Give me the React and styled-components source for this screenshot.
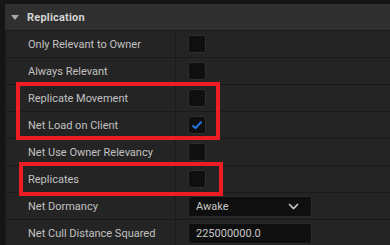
import React from 'react'
import styled, { createGlobalStyle } from 'styled-components'

const GlobalStyle = createGlobalStyle`
  html, body {
    margin: 0;
    padding: 0;
    background: #151515;
    font-family: Roboto, "Noto Sans", sans-serif;
  }
`

const Panel = styled.div`
  position: relative;
  width: 390px;
  height: 245px;
  overflow: hidden;
  padding: 4px 0 0 5px;
  box-sizing: border-box;
  background: #151515;
`

const Header = styled.div`
  display: flex;
  align-items: center;
  height: 26px;
  padding-left: 6px;
  background: #2f2f2f;
  border-bottom: 1px solid #1a1a1a;
  color: #d4d4d4;
  font-size: 11px;
  font-weight: 700;
  letter-spacing: 0.2px;
  gap: 8px;
`

const Caret = styled.span`
  width: 0;
  height: 0;
  border-left: 4.5px solid transparent;
  border-right: 4.5px solid transparent;
  border-top: 5px solid #a8a8a8;
`

const Row = styled.div`
  display: grid;
  grid-template-columns: 170px 1fr;
  height: 26px;
  background: #242424;
  border-bottom: 1px solid #1a1a1a;
  border-left: 1px solid #1c1c1c;
`

const Name = styled.div`
  display: flex;
  align-items: center;
  padding-left: 22px;
  color: #c2c2c2;
  font-size: 11px;
  border-right: 1px solid #1a1a1a;
  white-space: nowrap;
`

const Value = styled.div`
  display: flex;
  align-items: center;
  padding-left: 12px;
`

const Check = styled.div`
  width: 16px;
  height: 16px;
  border: 1px solid #2e2e2e;
  border-radius: 3px;
  background: #0f0f0f;
  display: flex;
  align-items: center;
  justify-content: center;
`

const Field = styled.div`
  width: 124px;
  height: 21px;
  box-sizing: border-box;
  border: 1px solid #2a2a2a;
  border-radius: 3px;
  background: #0f0f0f;
  display: flex;
  align-items: center;
  justify-content: space-between;
  padding: 0 12px 0 7px;
  color: #c8c8c8;
  font-size: 11px;
`

const Highlight = styled.div`
  position: absolute;
  border: 4px solid #ee1c25;
  box-sizing: border-box;
  pointer-events: none;
`

const rows = [
  { name: 'Only Relevant to Owner', kind: 'check' },
  { name: 'Always Relevant', kind: 'check' },
  { name: 'Replicate Movement', kind: 'check' },
  { name: 'Net Load on Client', kind: 'check', checked: true },
  { name: 'Net Use Owner Relevancy', kind: 'check' },
  { name: 'Replicates', kind: 'check' },
  { name: 'Net Dormancy', kind: 'select', value: 'Awake' },
  { name: 'Net Cull Distance Squared', kind: 'input', value: '225000000.0' },
]

const Tick = () => (
  <svg width="12" height="10" viewBox="0 0 12 10">
    <path d="M1.5 5.5 L4.5 8.2 L10.5 1.8" fill="none" stroke="#1f7be6" strokeWidth="2" />
  </svg>
)

const Chevron = () => (
  <svg width="11" height="7" viewBox="0 0 11 7">
    <path d="M1 1 L5.5 5.5 L10 1" fill="none" stroke="#c8c8c8" strokeWidth="1.6" />
  </svg>
)

const App = () => (
  <>
    <GlobalStyle />
    <Panel>
      <Header>
        <Caret />
        Replication
      </Header>
      {rows.map(r => (
        <Row key={r.name}>
          <Name>{r.name}</Name>
          <Value>
            {r.kind === 'check' && <Check>{r.checked && <Tick />}</Check>}
            {r.kind === 'select' && (
              <Field>
                {r.value}
                <Chevron />
              </Field>
            )}
            {r.kind === 'input' && <Field>{r.value}</Field>}
          </Value>
        </Row>
      ))}
      <Highlight style={{ left: 16, top: 82, width: 204, height: 58 }} />
      <Highlight style={{ left: 19, top: 162, width: 204, height: 34 }} />
    </Panel>
  </>
)

export default App
